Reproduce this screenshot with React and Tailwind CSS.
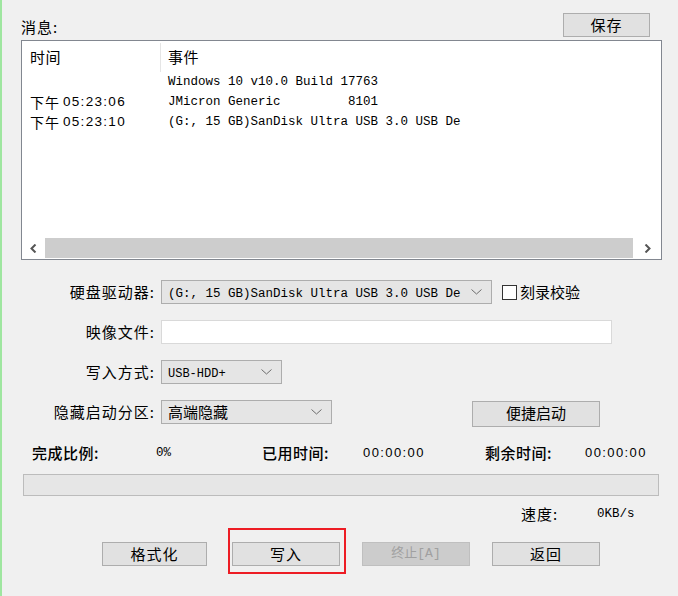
import React from "react";

const cjk = "font-['Noto_Sans_CJK_SC',sans-serif]";
const mono = "font-['Liberation_Mono','Noto_Sans_CJK_SC',monospace]";
const num = "font-['Liberation_Sans','Noto_Sans_CJK_SC',sans-serif]";

function Chevron() {
  return (
    <svg width="11" height="6" viewBox="0 0 11 6" className="shrink-0">
      <path d="M0.5 0.5 L5.5 5 L10.5 0.5" fill="none" stroke="#6d6d6d" strokeWidth="1" />
    </svg>
  );
}

function Select({ width, children }) {
  return (
    <div
      className={`${width} h-[24px] flex items-center justify-between bg-[#e5e5e5] border border-[#adadad] pl-[6px] pr-[9px]`}
    >
      <span className="truncate">{children}</span>
      <Chevron />
    </div>
  );
}

function Button({ width, disabled, children }) {
  return (
    <button
      className={`${width} h-[24px] flex items-center justify-center border text-[15px] tracking-[1px] ${
        disabled
          ? "bg-[#cccccc] border-[#bfbfbf] text-[#a0a0a0]"
          : "bg-[#e1e1e1] border-[#adadad] text-black"
      }`}
    >
      {children}
    </button>
  );
}

function Label({ children }) {
  return <div className="w-[155px] text-right text-[15px] tracking-[1px]">{children}</div>;
}

const rows = [
  { time: "", event: "Windows 10 v10.0 Build 17763" },
  { time: "05:23:06", event: "JMicron Generic         8101" },
  { time: "05:23:10", event: "(G:, 15 GB)SanDisk Ultra USB 3.0 USB De" },
];

export default function App() {
  return (
    <div
      className={`w-[678px] h-[596px] bg-[#f0f0f0] shadow-[inset_2px_0_0_#9fe6a0] ${cjk} text-[14px] text-black pt-[14px] overflow-hidden`}
    >
      {/* message header */}
      <div className="flex items-center justify-between pl-[21px] pr-[28px] h-[22px]">
        <span className="text-[15px] tracking-[1px] mt-[4px]">消息:</span>
        <Button width="w-[87px]">保存</Button>
      </div>

      {/* log list */}
      <div className="ml-[21px] mt-[4px] w-[641px] h-[220px] bg-white border border-[#828790] flex flex-col">
        <div className="flex h-[31px] items-center text-[15px]">
          <div className="w-[138px] pl-[8px] pt-[2px] tracking-[0.5px]">时间</div>
          <div className="w-px h-[29px] bg-[#e5e5e5] self-start mt-[2px]" />
          <div className="pl-[7px] pt-[2px] tracking-[0.5px]">事件</div>
        </div>
        {rows.map((r, i) => (
          <div key={i} className="flex h-[20px] items-center">
            <div className="w-[146px] pl-[8px] flex items-center gap-[3px] text-[14px]">
              {r.time && (
                <>
                  <span className="tracking-[1px]">下午</span>
                  <span className={`${num} text-[13.5px] tracking-[1.3px]`}>{r.time}</span>
                </>
              )}
            </div>
            <div className={`${mono} text-[12.5px] whitespace-pre`}>{r.event}</div>
          </div>
        ))}
        <div className="flex-1" />
        <div className="flex h-[20px] mb-[1px]">
          <div className="w-[23px] flex items-center justify-center">
            <svg width="7" height="9" viewBox="0 0 7 9">
              <path d="M5.5 0.5 L1.5 4.5 L5.5 8.5" fill="none" stroke="#555" strokeWidth="2" />
            </svg>
          </div>
          <div className="flex-1 bg-[#cdcdcd]" />
          <div className="w-[28px] flex items-center justify-center">
            <svg width="7" height="9" viewBox="0 0 7 9">
              <path d="M1.5 0.5 L5.5 4.5 L1.5 8.5" fill="none" stroke="#555" strokeWidth="2" />
            </svg>
          </div>
        </div>
      </div>

      {/* form */}
      <div className="mt-[20px] flex flex-col gap-[16px]">
        <div className="flex items-center h-[24px]">
          <Label>硬盘驱动器:</Label>
          <div className="ml-[6px]">
            <Select width="w-[331px]">
              <span className={`${mono} text-[12.5px]`}>(G:, 15 GB)SanDisk Ultra USB 3.0 USB De</span>
            </Select>
          </div>
          <div className="ml-[10px] w-[15px] h-[15px] border border-[#333] bg-white" />
          <span className="ml-[3px] text-[15px]">刻录校验</span>
        </div>

        <div className="flex items-center h-[24px]">
          <Label>映像文件:</Label>
          <div className="ml-[6px] w-[451px] h-[24px] bg-white border border-[#d9d9d9]" />
        </div>

        <div className="flex items-center h-[24px]">
          <Label>写入方式:</Label>
          <div className="ml-[6px]">
            <Select width="w-[121px]">
              <span className={`${mono} text-[12px]`}>USB-HDD+</span>
            </Select>
          </div>
        </div>

        <div className="flex items-center h-[24px]">
          <Label>隐藏启动分区:</Label>
          <div className="ml-[6px]">
            <Select width="w-[171px]">
              <span className="text-[15px]">高端隐藏</span>
            </Select>
          </div>
          <div className="ml-[140px] mt-[3px]">
            <button className="w-[128px] h-[26px] bg-[#e1e1e1] border border-[#adadad] text-[15px]">
              便捷启动
            </button>
          </div>
        </div>
      </div>

      {/* stats */}
      <div className="mt-[19px] h-[20px] flex items-center pl-[32px] text-[15px]">
        <span className="w-[124px] font-medium tracking-[0.5px]">完成比例:</span>
        <span className={`w-[106px] ${mono} text-[12.5px]`}>0%</span>
        <span className="w-[101px] font-medium tracking-[0.5px]">已用时间:</span>
        <span className={`w-[122px] ${num} text-[13px] tracking-[1.4px]`}>00:00:00</span>
        <span className="w-[100px] font-medium tracking-[0.5px]">剩余时间:</span>
        <span className={`${num} text-[13px] tracking-[1.4px]`}>00:00:00</span>
      </div>

      {/* progress */}
      <div className="mt-[11px] ml-[23px] w-[636px] h-[22px] bg-[#e6e6e6] border border-[#bcbcbc]" />

      {/* speed */}
      <div className="mt-[8px] h-[20px] flex items-center pl-[521px]">
        <span className="w-[76px] text-[15px] tracking-[1px]">速度:</span>
        <span className={`${mono} text-[12.5px]`}>0KB/s</span>
      </div>

      {/* actions */}
      <div className="mt-[18px] flex items-center pl-[102px]">
        <Button width="w-[105px]">格式化</Button>
        <div className="relative ml-[25px]">
          <Button width="w-[108px]">写入</Button>
          <span className="absolute left-[-4px] right-[-6px] top-[-14px] bottom-[-8px] border-2 border-[#ed1c24] pointer-events-none" />
        </div>
        <div className="ml-[22px]">
          <Button width="w-[108px]" disabled>
            <span className={`${mono} text-[13px] tracking-normal`}>终止[A]</span>
          </Button>
        </div>
        <div className="ml-[22px]">
          <Button width="w-[108px]">返回</Button>
        </div>
      </div>
    </div>
  );
}
